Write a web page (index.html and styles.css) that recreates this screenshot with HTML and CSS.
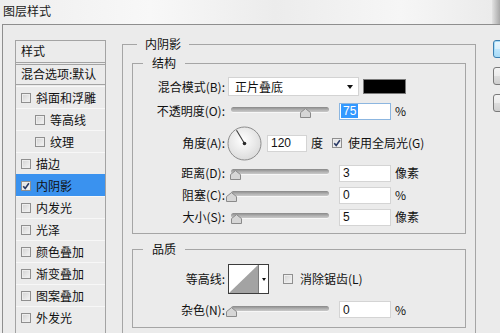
FILE: index.html
```html
<!DOCTYPE html>
<html lang="zh-CN">
<head>
<meta charset="utf-8">
<title>图层样式</title>
<link rel="stylesheet" href="styles.css">
</head>
<body>
<div class="window">
  <div class="titlebar">
    <span class="title">图层样式</span>
    <span class="frame-edge"></span>
  </div>
  <div class="dialog">
    <div class="styles-list">
      <div class="list-head">样式</div>
      <div class="list-blend">混合选项:默认</div>
      <div class="list-items">
        <div class="list-item"><span class="cb"></span>斜面和浮雕</div>
        <div class="list-item sub"><span class="cb"></span>等高线</div>
        <div class="list-item sub"><span class="cb"></span>纹理</div>
        <div class="list-item"><span class="cb"></span>描边</div>
        <div class="list-item selected"><span class="cb checked"><svg viewBox="0 0 8 8" width="8" height="8"><path d="M1.2 4.2 L3.2 6.4 L6.9 1.3" fill="none" stroke="#2a3a66" stroke-width="1.6"/></svg></span>内阴影</div>
        <div class="list-item"><span class="cb"></span>内发光</div>
        <div class="list-item"><span class="cb"></span>光泽</div>
        <div class="list-item"><span class="cb"></span>颜色叠加</div>
        <div class="list-item"><span class="cb"></span>渐变叠加</div>
        <div class="list-item"><span class="cb"></span>图案叠加</div>
        <div class="list-item"><span class="cb"></span>外发光</div>
      </div>
    </div>

    <div class="main">
      <fieldset class="group outer">
        <legend class="legend-outer">内阴影</legend>

        <fieldset class="group inner">
          <legend class="legend-inner">结构</legend>

          <div class="row r-blend">
            <span class="lbl">混合模式(B):</span>
            <div class="select"><span class="select-text">正片叠底</span><span class="select-arrow"></span></div>
            <span class="swatch"></span>
          </div>

          <div class="row r-gap6">
            <span class="lbl">不透明度(O):</span>
            <div class="slider"><div class="track"></div><span class="thumb" style="left:75%"><svg viewBox="0 0 11 10" width="11" height="10"><path d="M0.5 9.5 V4.6 L5.5 0.6 L10.5 4.6 V9.5 Z" fill="#d6d6d6" stroke="#8a8a8a"/></svg></span></div>
            <div class="field focused"><span class="sel">75</span></div>
            <span class="unit">%</span>
          </div>

          <div class="row r-angle">
            <span class="lbl">角度(A):</span>
            <svg class="dial" viewBox="0 0 35 35" width="35" height="35">
              <defs>
                <radialGradient id="dg" cx="0.45" cy="0.4" r="0.65">
                  <stop offset="0" stop-color="#ffffff"/>
                  <stop offset="1" stop-color="#d9d9d9"/>
                </radialGradient>
              </defs>
              <circle cx="17.5" cy="17.5" r="16.5" fill="url(#dg)" stroke="#8c8c8c"/>
              <line x1="17.5" y1="17.5" x2="9.5" y2="4.2" stroke="#3a3a3a" stroke-width="1.1"/>
              <circle cx="17.5" cy="17.5" r="1.8" fill="#2a2a2a"/>
            </svg>
            <div class="field f-angle">120</div>
            <span class="unit">度</span>
            <span class="cb checked cb-global"><svg viewBox="0 0 8 8" width="8" height="8"><path d="M1.2 4.2 L3.2 6.4 L6.9 1.3" fill="none" stroke="#2a3a66" stroke-width="1.6"/></svg></span>
            <span class="cb-label">使用全局光(G)</span>
          </div>

          <div class="row r-gap4">
            <span class="lbl">距离(D):</span>
            <div class="slider"><div class="track"></div><span class="thumb" style="left:4%"><svg viewBox="0 0 11 10" width="11" height="10"><path d="M0.5 9.5 V4.6 L5.5 0.6 L10.5 4.6 V9.5 Z" fill="#d6d6d6" stroke="#8a8a8a"/></svg></span></div>
            <div class="field">3</div>
            <span class="unit">像素</span>
          </div>

          <div class="row r-gap4">
            <span class="lbl">阻塞(C):</span>
            <div class="slider"><div class="track"></div><span class="thumb" style="left:0%"><svg viewBox="0 0 11 10" width="11" height="10"><path d="M0.5 9.5 V4.6 L5.5 0.6 L10.5 4.6 V9.5 Z" fill="#d6d6d6" stroke="#8a8a8a"/></svg></span></div>
            <div class="field">0</div>
            <span class="unit">%</span>
          </div>

          <div class="row r-gap4">
            <span class="lbl">大小(S):</span>
            <div class="slider"><div class="track"></div><span class="thumb" style="left:5%"><svg viewBox="0 0 11 10" width="11" height="10"><path d="M0.5 9.5 V4.6 L5.5 0.6 L10.5 4.6 V9.5 Z" fill="#d6d6d6" stroke="#8a8a8a"/></svg></span></div>
            <div class="field">5</div>
            <span class="unit">像素</span>
          </div>
        </fieldset>

        <fieldset class="group inner quality">
          <legend class="legend-inner">品质</legend>

          <div class="row r-contour">
            <span class="lbl">等高线:</span>
            <div class="contour">
              <svg class="contour-preview" viewBox="0 0 29 28" width="29" height="28"><polygon points="0,28 29,0 29,28" fill="#a3a3a3"/></svg>
              <span class="contour-arrow"></span>
            </div>
            <span class="cb cb-aa"></span>
            <span class="cb-label aa-label">消除锯齿(L)</span>
          </div>

          <div class="row r-noise">
            <span class="lbl">杂色(N):</span>
            <div class="slider"><div class="track"></div><span class="thumb" style="left:0%"><svg viewBox="0 0 11 10" width="11" height="10"><path d="M0.5 9.5 V4.6 L5.5 0.6 L10.5 4.6 V9.5 Z" fill="#d6d6d6" stroke="#8a8a8a"/></svg></span></div>
            <div class="field">0</div>
            <span class="unit">%</span>
          </div>
        </fieldset>
      </fieldset>
    </div>

    <div class="buttons">
      <button class="btn default" type="button" aria-label="确定"></button>
      <button class="btn" type="button" aria-label="复位"></button>
      <button class="btn" type="button" aria-label="新建样式"></button>
    </div>
  </div>
</div>
</body>
</html>
```

FILE: styles.css
```css
* { box-sizing: border-box; }

html, body {
  margin: 0;
  padding: 0;
}

body {
  width: 500px;
  height: 333px;
  overflow: hidden;
  font-family: "Noto Sans CJK SC", "Noto Sans", sans-serif;
  font-size: 12px;
  line-height: 16px;
  color: #111;
  background: #ebebeb;
}

.window {
  height: 333px;
  display: flex;
  flex-direction: column;
  background: linear-gradient(90deg, #eeeeee 0%, #f8f8f8 30%, #ececec 55%, #f6f6f6 80%, #eaeaea 100%);
}

.titlebar {
  flex: none;
  height: 24px;
  display: flex;
  justify-content: space-between;
  align-items: flex-start;
}

.title {
  padding: 3px 0 0 3px;
  line-height: 16px;
  font-size: 12px;
  color: #1a1a1a;
}

.frame-edge {
  width: 8px;
  height: 24px;
  background: linear-gradient(90deg, #e2e2e2, #a8a8a8);
}

.dialog {
  flex: 1;
  min-height: 0;
  margin-left: 2px;
  border-left: 1px solid #8e8e8e;
  border-top: 1px solid #8e8e8e;
  background: #ebebeb;
  display: flex;
  align-items: flex-start;
  overflow: hidden;
}

/* ---------- left styles list ---------- */
.styles-list {
  flex: none;
  width: 91px;
  height: 320px;
  margin: 15px 0 0 12px;
  border: 1px solid #a3a3a3;
  border-bottom: none;
}

.list-head {
  height: 24px;
  padding: 2px 0 0 5px;
  line-height: 16px;
  border-bottom: 3px double #a3a3a3;
}

.list-blend {
  height: 20px;
  padding: 1px 0 0 5px;
  line-height: 16px;
  border-bottom: 1px solid #a3a3a3;
}

.list-items {
  padding-top: 1px;
}

.list-item {
  height: 22px;
  border-top: 1px solid #f7f7f7;
  display: flex;
  align-items: center;
  gap: 5px;
  padding-left: 5px;
}

.list-item.sub {
  padding-left: 19px;
}

.list-item.selected {
  background: #3a92ef;
  border-top-color: #3a92ef;
}

.cb {
  flex: none;
  width: 10px;
  height: 10px;
  border: 1px solid #8f8f8f;
  background: linear-gradient(135deg, #d2d2d2, #f5f5f5);
  box-shadow: inset 0 0 0 1px #ededed;
  display: inline-flex;
  align-items: center;
  justify-content: center;
}

.cb.checked {
  background: linear-gradient(135deg, #dcdcdc, #fafafa);
}

.cb svg { display: block; }

/* ---------- main groups ---------- */
.main {
  flex: none;
  width: 354px;
  margin: 11px 0 0 16px;
}

fieldset.group {
  margin: 0;
  min-width: 0;
  border: 1px solid #a5a5a5;
}

fieldset.group legend {
  line-height: 16px;
  font-size: 12px;
}

.outer {
  height: 320px;
  padding: 3px 9px 0 9px;
}

.legend-outer {
  margin-left: 5px;
  padding: 0 8px;
}

.inner {
  padding: 6px 8px 7px 8px;
}

.legend-inner {
  margin-left: 2px;
  padding: 0 9px;
}

.quality {
  margin-top: 7px !important;
  padding: 7px 8px 9px 8px;
}

.row {
  display: flex;
  align-items: center;
}

.lbl {
  flex: none;
  width: 84px;
  text-align: right;
  white-space: nowrap;
}

.r-blend { height: 19px; }
.r-gap6 { height: 18px; margin-top: 6px; }
.r-angle { height: 34px; margin-top: 6px; }
.r-gap4 { height: 18px; margin-top: 4px; }
.r-contour { height: 30px; }
.r-noise { height: 17px; margin-top: 7px; }

/* select */
.select {
  flex: none;
  width: 131px;
  height: 19px;
  margin-left: 3px;
  background: #fff;
  border: 1px solid #d3d3d3;
  display: flex;
  align-items: center;
  justify-content: space-between;
  padding: 0 5px 0 6px;
}

.select-arrow {
  width: 0;
  height: 0;
  border-left: 3px solid transparent;
  border-right: 3px solid transparent;
  border-top: 4px solid #111;
}

.swatch {
  flex: none;
  width: 43px;
  height: 15px;
  margin-left: 4px;
  background: #000;
  border: 1px solid #7a7a7a;
}

/* slider */
.slider {
  flex: none;
  position: relative;
  width: 98px;
  height: 18px;
  margin-left: 6px;
}

.track {
  margin-top: 5px;
  height: 5px;
  border-radius: 3px;
  background: linear-gradient(#888888, #b4b4b4 60%, #c9c9c9);
  box-shadow: 0 1px 0 #f7f7f7;
}

.thumb {
  position: absolute;
  top: 6px;
  width: 11px;
  height: 10px;
  margin-left: -5px;
}

.thumb svg { display: block; }

/* input fields */
.field {
  flex: none;
  width: 52px;
  height: 17px;
  margin-left: 10px;
  background: #fff;
  border: 1px solid #d4d4d4;
  padding: 0 0 0 3px;
  display: flex;
  align-items: center;
  font-family: "Liberation Sans", Arial, sans-serif;
  font-size: 12px;
}

.field.focused {
  border-color: #8cb6e0;
  padding-left: 1px;
}

.sel {
  background: #3399ff;
  color: #fff;
  padding: 0 2px;
  line-height: 14px;
}

.f-angle {
  width: 40px;
  margin-left: 5px;
}

.unit {
  flex: none;
  margin-left: 4px;
}

.dial {
  flex: none;
  display: block;
  margin-left: 2px;
}

.cb-global {
  margin-left: 9px;
}

.cb-label {
  margin-left: 6px;
  white-space: nowrap;
}

/* contour picker */
.contour {
  flex: none;
  width: 41px;
  height: 30px;
  margin-left: 3px;
  border: 1px solid #3c3c3c;
  background: #fff;
  display: flex;
}

.contour-preview {
  display: block;
  flex: none;
}

.contour-arrow {
  flex: 1;
  border-left: 1px solid #7a7a7a;
  display: flex;
  align-items: center;
  justify-content: center;
}

.contour-arrow::after {
  content: "";
  width: 0;
  height: 0;
  border-left: 2px solid transparent;
  border-right: 2px solid transparent;
  border-top: 3px solid #111;
}

.cb-aa {
  margin-left: 14px;
}

.aa-label {
  margin-left: 7px;
}

/* right buttons */
.buttons {
  flex: none;
  margin: 15px 0 0 17px;
  display: flex;
  flex-direction: column;
  gap: 9px;
}

.btn {
  width: 76px;
  height: 18px;
  padding: 0;
  border: 1px solid #7a7a7a;
  border-radius: 3px;
  background: linear-gradient(#f4f4f4, #ebebeb 50%, #dddddd 51%, #cfcfcf);
}

.btn.default {
  border-color: #3c7fb1;
  background: linear-gradient(#eaf6fd, #d9f0fc 50%, #bee6fd 51%, #a7d9f5);
  box-shadow: inset 0 0 0 1px #a6dcf7;
}
```
